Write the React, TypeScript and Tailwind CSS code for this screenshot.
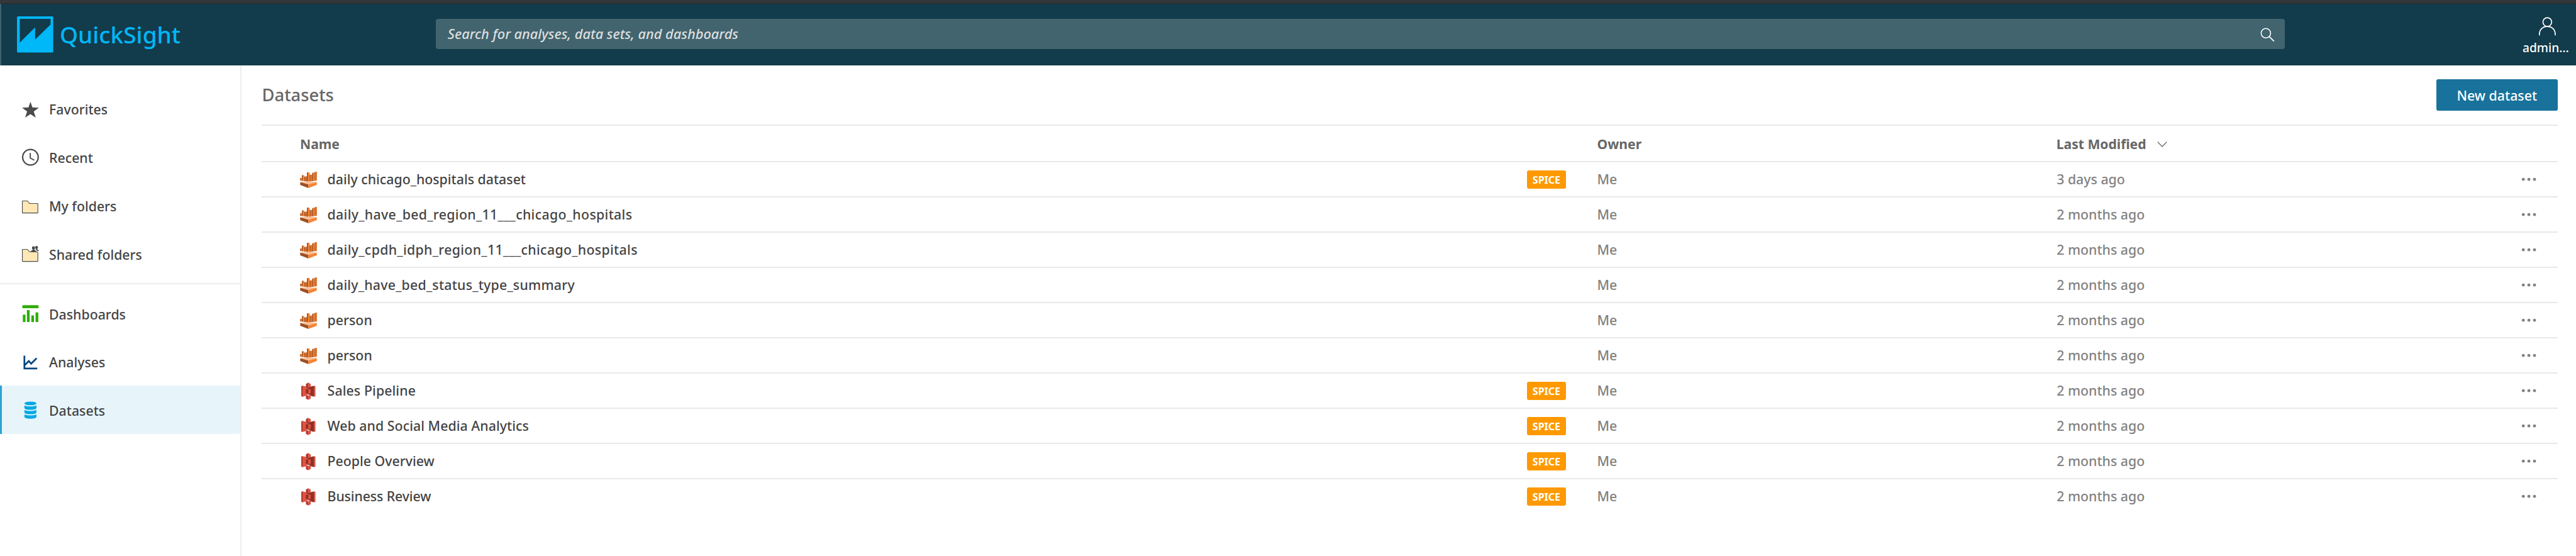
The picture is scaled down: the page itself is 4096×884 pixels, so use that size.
import type { ReactNode } from "react";

type Source = "athena" | "s3";

interface Dataset {
  name: string;
  source: Source;
  spice: boolean;
  modified: string;
  tracking?: string;
}

const datasets: Dataset[] = [
  { name: "daily chicago_hospitals dataset", source: "athena", spice: true, modified: "3 days ago" },
  { name: "daily_have_bed_region_11___chicago_hospitals", source: "athena", spice: false, modified: "2 months ago", tracking: "tracking-[0.32px]" },
  { name: "daily_cpdh_idph_region_11___chicago_hospitals", source: "athena", spice: false, modified: "2 months ago", tracking: "tracking-[0.32px]" },
  { name: "daily_have_bed_status_type_summary", source: "athena", spice: false, modified: "2 months ago", tracking: "tracking-[0.22px]" },
  { name: "person", source: "athena", spice: false, modified: "2 months ago" },
  { name: "person", source: "athena", spice: false, modified: "2 months ago" },
  { name: "Sales Pipeline", source: "s3", spice: true, modified: "2 months ago", tracking: "tracking-[0.1px]" },
  { name: "Web and Social Media Analytics", source: "s3", spice: true, modified: "2 months ago", tracking: "tracking-[0.05px]" },
  { name: "People Overview", source: "s3", spice: true, modified: "2 months ago" },
  { name: "Business Review", source: "s3", spice: true, modified: "2 months ago", tracking: "tracking-[-0.12px]" },
];

function Icon({ children }: { children: ReactNode }) {
  return (
    <svg viewBox="0 0 36 36" className="size-[28.8px] shrink-0" fill="none">
      {children}
    </svg>
  );
}

const StarIcon = () => (
  <Icon>
    <path d="M18 3.4 21.9 14.7 34.7 15.4 24.6 22.9 28.6 34.9 18 28 7.4 34.9 11.4 22.9 1.3 15.4 14.1 14.7Z" fill="#4b4b4b" />
  </Icon>
);

const ClockIcon = () => (
  <Icon>
    <circle cx="18" cy="18.7" r="15.5" stroke="#4b4b4b" strokeWidth="2.8" />
    <path d="M17.6 10.3V20.4L25.6 24.6" stroke="#4b4b4b" strokeWidth="2.3" />
  </Icon>
);

const folderPath = "M1.9 10V32.4Q1.9 33.3 2.8 33.3H31.8Q32.7 33.3 32.7 32.4V15.3Q32.7 14.4 31.8 14.4H16.2L12.8 10Q12.3 9.3 11.5 9.3H2.7Q1.9 9.3 1.9 10Z";

const FolderIcon = () => (
  <Icon>
    <path d={folderPath} fill="#ffe8b5" stroke="#4b4b4b" strokeWidth="1.4" />
  </Icon>
);

const SharedFolderIcon = () => (
  <Icon>
    <path d={folderPath} fill="#ffe8b5" stroke="#4b4b4b" strokeWidth="1.4" />
    <g fill="#4b4b4b">
      <ellipse cx="24.1" cy="6.5" rx="3" ry="3.3" />
      <path d="M18.4 14.6Q19 11 22.8 10.2V8H25.4V10.2Q29.4 11 30.2 14.6Z" />
      <ellipse cx="30.2" cy="5.6" rx="2.8" ry="3.1" />
      <path d="M28.6 8.5H31.6V9.4Q34.3 10.2 34.8 12.6H31Q30.2 10.6 28.2 9.6Z" />
    </g>
  </Icon>
);

const DashboardIcon = () => (
  <Icon>
    <path d="M2 1.7H34V7.4H2ZM2.9 20.3H8.1V36H2.9ZM11 11.3H16.4V36H11ZM19.8 22H25V36H19.8ZM28.2 16H33.6V36H28.2Z" fill="#2dad00" />
  </Icon>
);

const AnalysisIcon = () => (
  <Icon>
    <path d="M6 5.5V31.2H31.5M7 24.3 14.7 16.2 19.4 21.5 30.4 10.6" stroke="#01457c" strokeWidth="3.4" />
  </Icon>
);

const DatasetIcon = () => (
  <Icon>
    <g fill="#00a8e4">
      <ellipse cx="18" cy="5.5" rx="12" ry="3.6" />
      <path d="M6 9.6Q18 13.8 30 9.6V14.6Q29 18.2 18 18.2T6 14.6Z" />
      <path d="M6 18.6Q18 22.6 30 18.6V23.4Q29 27 18 27T6 23.4Z" />
      <path d="M6 27.4Q18 31.4 30 27.4V32.2Q29 35.9 18 35.9T6 32.2Z" />
    </g>
  </Icon>
);

function SourceIcon({ source }: { source: Source }) {
  if (source === "athena") {
    return (
      <svg viewBox="45 39 108 108" className="size-[28.8px] shrink-0">
        <path d="M50 85 60 83V68L68 66 75 70V76L90 74V52L97 49 107 52V65L122 63V54L131 50 137 53V48L146 46 149 48V99L99 106 50 99Z" fill="#f58536" />
        <path d="M50 85 54 83V99.5L50 99ZM60 69 65 66V101L60 100.5ZM75 78 80 75V103L75 102.5ZM90 53 96 50V105.5L90 105ZM107 67 112 64V104L107 105ZM122 56 127 52V102L122 103ZM137 50 141 47V100L137 101Z" fill="#9d5025" />
        <path d="M84 76H90V104H84ZM117 65H122V103H117ZM146 46 149 48V99L146 99.5Z" fill="#c1682f" />
        <path d="M50 108 99 104 149 108 99 123Z" fill="#fbbf93" />
        <path d="M50 108 99 122V144L50 125Z" fill="#9d5025" />
        <path d="M149 108 99 122V144L149 125Z" fill="#f58536" />
      </svg>
    );
  }
  return (
    <svg viewBox="45 39 108 108" className="size-[28.8px] shrink-0">
      <path d="M57 65 64 62 98 71V119L64 128 57 124Z" fill="#e05243" />
      <path d="M57 65 64 62V128L57 124Z" fill="#a83a2c" />
      <path d="M98 71 134 62V128L98 119Z" fill="#8c3123" />
      <path d="M134 62 141 65V124L134 128Z" fill="#e05243" />
      <path d="M84 71 98 67 113 71 98 76Z" fill="#5e1f18" />
      <path d="M98 44 84 52V71L98 74Z" fill="#a83a2c" />
      <path d="M98 44 113 52V71L98 74Z" fill="#e05243" />
      <path d="M84 83 98 81V109L84 107Z" fill="#8c3123" />
      <path d="M98 81 113 83V107L98 109Z" fill="#e05243" />
      <path d="M84 118 98 113 113 118 98 122Z" fill="#f2b0a9" />
      <path d="M84 119 98 122V147L84 139Z" fill="#b33d30" />
      <path d="M113 119 98 122V147L113 139Z" fill="#e05243" />
    </svg>
  );
}

function NavItem({ icon, label, active = false }: { icon: ReactNode; label: string; active?: boolean }) {
  return (
    <a
      className={
        active
          ? "flex h-[76.86px] items-center gap-[14.8px] rounded-r-[3px] border-l-[3px] border-[#2ea3d3] bg-[#e7f5fb] pl-[31.4px]"
          : "flex h-[76.86px] items-center gap-[14.8px] pl-[34.4px]"
      }
    >
      {icon}
      <span className="pt-[3px]">{label}</span>
    </a>
  );
}

function Header() {
  return (
    <header className="flex h-[104px] shrink-0 flex-col bg-[#123b4b]">
      <div className="h-[6px] shrink-0 border-b border-[#2a2a29] bg-[#35363a]" />
      <div className="flex h-[98px] border-l-2 border-[#3f626e]">
        <div className="flex w-[691.3px] pt-[20px] pl-[25.2px]">
          <svg viewBox="0 0 72 72" className="size-[57.6px] shrink-0">
            <path
              fillRule="evenodd"
              fill="#00b7f7"
              d="M2 0H70Q72 0 72 2V70Q72 72 70 72H2Q0 72 0 70V2Q0 0 2 0ZM5.6 5.1V52.2L36 21.8V46.4L66.8 16.2V5.1Z"
            />
          </svg>
          <span className="ml-[10.2px] text-[37.1px] leading-[57.6px] text-[#00b7f7]">QuickSight</span>
        </div>
        <div className="mt-[24px] flex h-[48px] w-[2940px] items-center justify-between rounded-[4px] bg-[#41646f] pr-[13px] pl-[18.5px]">
          <span className="pt-px text-[21.75px] text-[#dedede] italic">Search for analyses, data sets, and dashboards</span>
          <svg viewBox="0 0 36 36" className="size-[28.8px]" fill="none" stroke="#fff">
            <circle cx="13.6" cy="16" r="9.4" strokeWidth="1.9" />
            <path d="M20.3 22.7 29.8 32" strokeWidth="2.2" />
          </svg>
        </div>
        <div className="ml-auto flex w-[88px] flex-col pt-[18.6px] text-white">
          <svg viewBox="0 0 36 40" className="ml-[28px] h-[32px] w-[28.8px]" fill="none" stroke="#fff" strokeWidth="2.1">
            <circle cx="18" cy="12.6" r="8.7" />
            <path d="M2.3 39V37C2.3 27 9 21.4 18 21.4S33.7 27 33.7 37V39" />
          </svg>
          <span className="mt-[4.4px] ml-[3px] text-[19.2px] leading-[30px]">admin…</span>
        </div>
      </div>
    </header>
  );
}

export default function App() {
  return (
    <div className="flex h-[884px] w-[4096px] flex-col overflow-hidden bg-white font-['Noto_Sans',sans-serif] text-[21.3px] font-medium whitespace-nowrap text-[#444]">
      <Header />
      <div className="flex min-h-0 flex-1">
        <nav className="w-[384px] shrink-0 border-r-2 border-[#eee] pt-[30.5px]">
          <NavItem icon={<StarIcon />} label="Favorites" />
          <NavItem icon={<ClockIcon />} label="Recent" />
          <NavItem icon={<FolderIcon />} label="My folders" />
          <NavItem icon={<SharedFolderIcon />} label="Shared folders" />
          <div className="mt-[8px] mb-[7.7px] h-[2px] bg-[#eee]" />
          <NavItem icon={<DashboardIcon />} label="Dashboards" />
          <NavItem icon={<AnalysisIcon />} label="Analyses" />
          <NavItem icon={<DatasetIcon />} label="Datasets" active />
        </nav>
        <main className="flex-1 pr-[29px] pl-[32px]">
          <div className="flex h-[94.4px] justify-between pt-[22.4px]">
            <h1 className="ml-[0.6px] pt-px text-[27.3px] leading-[48px] text-[#666]">Datasets</h1>
            <button className="h-[50px] w-[193.4px] rounded-[3px] bg-[#18729b] pt-px text-white">New dataset</button>
          </div>
          <div className="flex h-[57.6px] items-center border-t-2 border-[#e9e9e9] pt-px pl-[61px] text-[21.1px] font-bold text-[#666]">
            <span className="w-[2062.6px]">Name</span>
            <span className="w-[730.2px]">Owner</span>
            <span>Last Modified</span>
            <svg viewBox="0 0 20 12" className="mt-[2px] ml-[17px] h-[9.6px] w-[16px]" fill="none" stroke="#666" strokeWidth="1.6">
              <path d="M1 1 10 10 19 1" />
            </svg>
          </div>
          {datasets.map((d, i) => (
            <div key={i} className="flex h-[56.04px] items-center border-t-2 border-[#e9e9e9] pl-[60.4px] text-[#828282]">
              <SourceIcon source={d.source} />
              <span className={`ml-[15.4px] w-[1907.2px] text-[#444] ${d.tracking ?? ""}`}>{d.name}</span>
              <span className="w-[111.8px]">
                {d.spice && (
                  <span className="flex h-[29px] w-[62.4px] items-center justify-center rounded-[3px] bg-[#ff9900] pt-px text-[16px] font-bold text-white">
                    SPICE
                  </span>
                )}
              </span>
              <span className="w-[730.6px]">Me</span>
              <span>{d.modified}</span>
              <svg viewBox="0 0 30 8" className="mr-[34px] ml-auto h-[6.4px] w-[24px]" fill="#828282">
                <circle cx="4" cy="4" r="3" />
                <circle cx="15.1" cy="4" r="3" />
                <circle cx="26.3" cy="4" r="3" />
              </svg>
            </div>
          ))}
        </main>
      </div>
    </div>
  );
}
